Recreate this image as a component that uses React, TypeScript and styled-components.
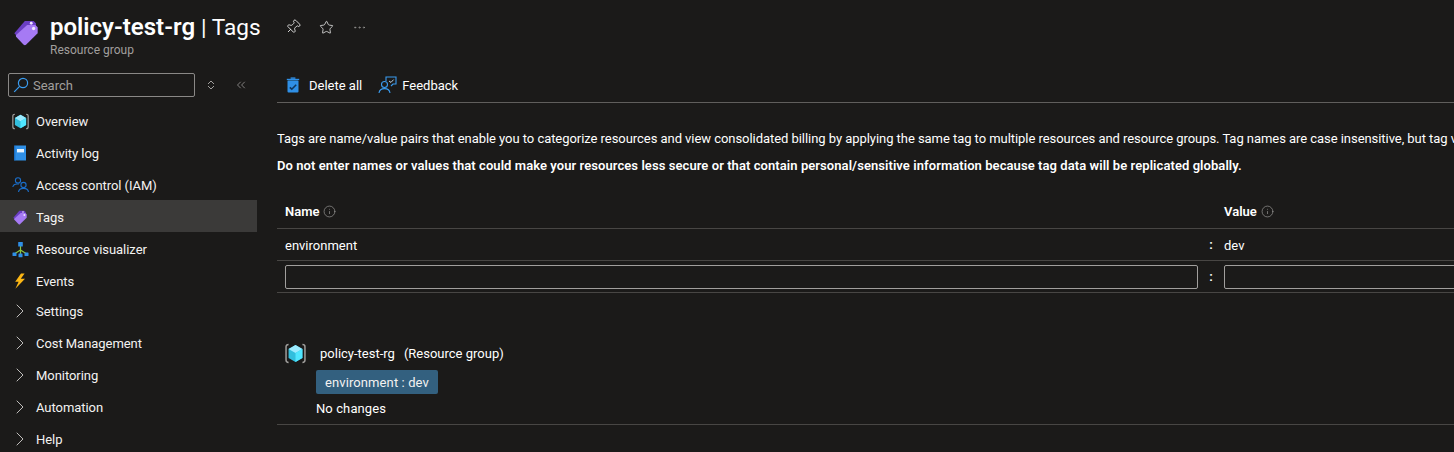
import React from 'react';
import styled, { createGlobalStyle } from 'styled-components';
import { ChevronRight, Pin, Star, Ellipsis, ChevronsLeft, Info } from 'lucide-react';

const GlobalStyle = createGlobalStyle`
  html, body {
    margin: 0;
    height: 100%;
    overflow: hidden;
    background: #1b1a19;
  }
  body {
    color: #fff;
    font-family: Roboto, "Open Sans", sans-serif;
    font-size: 13px;
  }
`;

const Page = styled.div`
  width: 1454px;
  height: 452px;
  overflow: hidden;
`;

const Header = styled.header`
  height: 65px;
  padding: 13px 0 0 12px;
  box-sizing: border-box;
  display: flex;
  align-items: flex-start;
`;

const BladeIcon = styled.div`
  width: 28px;
  height: 28px;
  margin: 5px 10px 0 0;
`;

const TitleBlock = styled.div`
  display: flex;
  flex-direction: column;
`;

const Title = styled.h1`
  margin: 0;
  font-size: 24px;
  line-height: 28px;
  font-weight: 600;
  color: #fff;
  white-space: nowrap;
  span {
    font-size: 22.6px;
    font-weight: 400;
  }
`;

const Subtitle = styled.div`
  font-size: 12px;
  line-height: 16px;
  color: #a19f9d;
`;

const TitleActions = styled.div`
  display: flex;
  align-items: center;
  gap: 18px;
  margin: 6px 0 0 24px;
  color: #e6e6e6;
`;

const PinIcon = styled(Pin)`
  transform: rotate(45deg);
`;

const Body = styled.div`
  display: grid;
  grid-template-columns: 257px 1fr;
  column-gap: 20px;
`;

const Sidebar = styled.nav`
  display: flex;
  flex-direction: column;
`;

const SearchRow = styled.div`
  display: flex;
  align-items: center;
  box-sizing: border-box;
  padding: 8px 0 7px 8px;
  height: 39px;
`;

const SearchBox = styled.div`
  width: 187px;
  height: 24px;
  box-sizing: border-box;
  border: 1px solid #8a8886;
  border-radius: 2px;
  display: flex;
  align-items: center;
  gap: 4px;
  padding-left: 4px;
  color: #a19f9d;
`;

const SearchTools = styled.div`
  display: flex;
  align-items: center;
  gap: 18px;
  margin-left: 11px;
  color: #a19f9d;
`;

const NavItem = styled.div<{ $active?: boolean }>`
  height: 32px;
  flex: none;
  display: flex;
  align-items: center;
  box-sizing: border-box;
  padding-top: 2px;
  background: ${(p) => (p.$active ? '#3b3a39' : 'transparent')};
  color: #f3f2f1;
  font-size: 13px;
  letter-spacing: -0.05px;
`;

const NavGroups = styled.div`
  display: flex;
  flex-direction: column;
  margin-top: -2px;
`;

const NavIconSlot = styled.div`
  width: 36px;
  padding-left: 12px;
  box-sizing: border-box;
  display: flex;
  align-items: center;
  color: #d2d0ce;
`;

const NavChevron = styled(ChevronRight)`
  margin-left: -4px;
  flex: none;
`;

const Main = styled.main`
  min-width: 0;
  display: flex;
  flex-direction: column;
  padding-top: 5px;
`;

const Toolbar = styled.div`
  height: 33px;
  box-sizing: border-box;
  border-bottom: 1px solid #605e5c;
  display: flex;
  align-items: center;
  padding: 0 0 2px 9px;
  gap: 16px;
`;

const ToolButton = styled.div<{ $gap: number }>`
  display: flex;
  align-items: center;
  gap: ${(p) => p.$gap}px;
  color: #fff;
`;

const Description = styled.p<{ $bold?: boolean }>`
  margin: 0;
  white-space: nowrap;
  overflow: hidden;
  font-size: 13px;
  line-height: 18px;
  font-weight: ${(p) => (p.$bold ? 600 : 400)};
  letter-spacing: ${(p) => (p.$bold ? '0.07px' : '-0.05px')};
  color: #fff;
`;

const Descriptions = styled.div`
  display: flex;
  flex-direction: column;
  gap: 9px;
  padding-top: 27px;
`;

const TagTable = styled.div`
  margin-top: 18px;
`;

const TagRow = styled.div<{ $height: number }>`
  display: grid;
  grid-template-columns: 913px 26px 1fr;
  height: ${(p) => p.$height}px;
  align-items: center;
  padding-left: 8px;
  box-sizing: border-box;
  border-bottom: 1px solid #484644;
`;

const HeaderCell = styled.div`
  display: flex;
  align-items: center;
  gap: 4px;
  font-weight: 600;
  color: #fff;
  padding-top: 2px;
`;

const InfoMark = styled.span`
  display: inline-flex;
  color: #a19f9d;
`;

const BodyCell = styled.div`
  padding-top: 1px;
`;

const Colon = styled.div`
  text-align: center;
  font-weight: 600;
`;

const TagInput = styled.input`
  width: 100%;
  height: 24px;
  box-sizing: border-box;
  background: transparent;
  border: 1px solid #a19f9d;
  border-radius: 2px;
  outline: none;
  display: block;
`;

const ValueInput = styled(TagInput)`
  width: calc(100% + 40px);
`;

const Summary = styled.section`
  margin-top: 48px;
  padding: 0 0 6px 8px;
  border-bottom: 1px solid #484644;
`;

const SummaryHead = styled.div`
  display: flex;
  align-items: center;
  height: 24px;
  gap: 14px;
  margin-bottom: 5px;
  span + span {
    margin-left: 9px;
  }
`;

const SummaryText = styled.div`
  white-space: nowrap;
`;

const SummaryBody = styled.div`
  padding-left: 31px;
`;

const TagPill = styled.div`
  display: inline-flex;
  align-items: center;
  height: 24px;
  padding: 0 9px;
  background: #33607f;
  border-radius: 2px;
  color: #f3f2f1;
  letter-spacing: 0.1px;
`;

const Status = styled.div`
  line-height: 18px;
  margin-top: 6px;
  letter-spacing: 0.1px;
`;

const TagGlyph: React.FC<{ size: number }> = ({ size }) => (
  <svg width={size} height={size} viewBox="0 0 24 24">
    <path d="M11 2.5 L18.5 2.5 L20.5 4.5 L20.5 9 L9 20.5 L2 13 Z" fill="#6b3fc4" />
    <path d="M13 6 L20 6 L22 8 L22 13 L12 23 Q11 23.6 10 23 L3.5 16 Q3 15 3.5 14.5 Z" fill="#a67af4" />
    <circle cx="18.5" cy="9" r="1.4" fill="#f0e6ff" />
    <circle cx="16.5" cy="4.5" r="1.2" fill="#f0e6ff" />
  </svg>
);

const CubeGlyph: React.FC<{ size: number }> = ({ size }) => (
  <svg width={size} height={size} viewBox="0 0 20 20">
    <path d="M3.4 1.5 Q1 1.5 1 3.5 V16.5 Q1 18.5 3.4 18.5 M16.6 1.5 Q19 1.5 19 3.5 V16.5 Q19 18.5 16.6 18.5" fill="none" stroke="#a19f9d" strokeWidth="1.4" />
    <path d="M10 2 L16.6 5.8 L16.6 14.2 L10 18 L3.4 14.2 L3.4 5.8 Z" fill="#32bedd" />
    <path d="M10 2 L16.6 5.8 L10 9.6 L3.4 5.8 Z" fill="#9cebff" />
    <path d="M10 9.6 L16.6 5.8 L16.6 14.2 L10 18 Z" fill="#50e6ff" />
  </svg>
);

const MagnifierGlyph = () => (
  <svg width="16" height="16" viewBox="0 0 16 16" fill="none" stroke="#3a9cf0" strokeWidth="1.2">
    <circle cx="10" cy="6" r="4.6" />
    <path d="M6.6 9.4 L1.2 14.8" />
  </svg>
);

const LogGlyph = () => (
  <svg width="16" height="16" viewBox="0 0 16 16">
    <path d="M2 2 Q2 0.5 3.5 0.5 H14 V15.5 H3.5 Q2 15.5 2 14 Z" fill="#2f8fe6" />
    <rect x="5" y="4" width="7" height="3.4" fill="#e8f4ff" />
    <rect x="2" y="0.5" width="1.4" height="15" fill="#1a6ec2" />
  </svg>
);

const PeopleGlyph = () => (
  <svg width="18" height="16" viewBox="0 0 18 16" fill="none" stroke="#1b6ec9" strokeWidth="1.1">
    <circle cx="6" cy="3.4" r="2.6" />
    <path d="M0.8 10 Q1.5 7 5 7 H7" />
    <circle cx="11.5" cy="8" r="2.6" />
    <path d="M6.5 15 Q7 11.4 11.5 11.4 Q16 11.4 16.5 15" />
  </svg>
);

const VisualizerGlyph = () => (
  <svg width="17" height="17" viewBox="0 0 17 17">
    <path d="M8.5 5 V13 M8.5 9 L3 12.5 M8.5 9 L14 12.5" stroke="#8cc63f" strokeWidth="1.2" fill="none" />
    <rect x="6.2" y="1" width="4.6" height="4.6" rx="0.5" fill="#2f8fe6" />
    <rect x="0.5" y="11.5" width="4" height="3.6" rx="0.5" fill="#2f8fe6" />
    <rect x="6.5" y="12.6" width="4" height="3.6" rx="0.5" fill="#2f8fe6" />
    <rect x="12.5" y="11.5" width="4" height="3.6" rx="0.5" fill="#2f8fe6" />
  </svg>
);

const BoltGlyph = () => (
  <svg width="16" height="16" viewBox="0 0 16 16">
    <path d="M9 0.5 H12.6 L8.8 5.8 L13 5.8 L3.4 15.8 L6.6 8.8 L3.2 8.8 Z" fill="#fcb714" />
  </svg>
);

const TrashGlyph = () => (
  <svg width="14" height="16" viewBox="0 0 14 16">
    <rect x="1.5" y="3.4" width="11" height="12" rx="1" fill="#2f8fe6" />
    <rect x="0.8" y="1.8" width="12.4" height="1.4" fill="#2f8fe6" />
    <rect x="4.6" y="0.4" width="4.8" height="1.4" fill="#2f8fe6" />
    <path d="M3.8 10.4 L5.8 12.2 L10.2 7.8" stroke="#10365c" strokeWidth="1.6" fill="none" />
  </svg>
);

const FeedbackGlyph = () => (
  <svg width="19" height="18" viewBox="0 0 19 18" fill="none" stroke="#3a9cf0" strokeWidth="1.1">
    <path d="M8 5 V1 H18 V8 H15 L13 10" />
    <circle cx="6.5" cy="8.5" r="3" />
    <path d="M1 17 Q1.5 12.6 6.5 12.6 Q11.5 12.6 12 17" />
    <path d="M11 5 L13 6.4 L15.6 3.6" stroke="#cfe6fb" strokeWidth="0.9" />
  </svg>
);

const SortGlyph = () => (
  <svg width="10" height="10" viewBox="0 0 10 10" fill="none" stroke="#a19f9d" strokeWidth="1">
    <path d="M2 4 L5 1 L8 4 M2 6 L5 9 L8 6" />
  </svg>
);

const topItems = [
  { label: 'Overview', icon: <CubeGlyph size={17} /> },
  { label: 'Activity log', icon: <LogGlyph /> },
  { label: 'Access control (IAM)', icon: <PeopleGlyph /> },
  { label: 'Tags', icon: <TagGlyph size={16} />, active: true },
  { label: 'Resource visualizer', icon: <VisualizerGlyph /> },
  { label: 'Events', icon: <BoltGlyph /> },
];

const groupItems = ['Settings', 'Cost Management', 'Monitoring', 'Automation', 'Help'];

const App: React.FC = () => (
  <Page>
    <GlobalStyle />
    <Header>
      <BladeIcon>
        <TagGlyph size={28} />
      </BladeIcon>
      <TitleBlock>
        <Title>
          policy-test-rg <span>| Tags</span>
        </Title>
        <Subtitle>Resource group</Subtitle>
      </TitleBlock>
      <TitleActions>
        <PinIcon size={16} strokeWidth={1.3} />
        <Star size={15} strokeWidth={1.3} />
        <Ellipsis size={15} strokeWidth={1} color="#a19f9d" />
      </TitleActions>
    </Header>
    <Body>
      <Sidebar>
        <SearchRow>
          <SearchBox>
            <MagnifierGlyph />
            Search
          </SearchBox>
          <SearchTools>
            <SortGlyph />
            <ChevronsLeft size={14} strokeWidth={1.3} />
          </SearchTools>
        </SearchRow>
        {topItems.map((item) => (
          <NavItem key={item.label} $active={item.active}>
            <NavIconSlot>{item.icon}</NavIconSlot>
            {item.label}
          </NavItem>
        ))}
        <NavGroups>
          {groupItems.map((label) => (
            <NavItem key={label}>
              <NavIconSlot>
                <NavChevron size={24} strokeWidth={0.9} />
              </NavIconSlot>
              {label}
            </NavItem>
          ))}
        </NavGroups>
      </Sidebar>
      <Main>
        <Toolbar>
          <ToolButton $gap={9}>
            <TrashGlyph />
            Delete all
          </ToolButton>
          <ToolButton $gap={5}>
            <FeedbackGlyph />
            Feedback
          </ToolButton>
        </Toolbar>
        <Descriptions>
          <Description>
            Tags are name/value pairs that enable you to categorize resources and view consolidated billing by applying
            the same tag to multiple resources and resource groups. Tag names are case insensitive, but tag values are
            case sensitive.
          </Description>
          <Description $bold>
            Do not enter names or values that could make your resources less secure or that contain personal/sensitive
            information because tag data will be replicated globally.
          </Description>
        </Descriptions>
        <TagTable>
          <TagRow $height={36}>
            <HeaderCell>
              Name
              <InfoMark>
                <Info size={13} strokeWidth={1.2} />
              </InfoMark>
            </HeaderCell>
            <div />
            <HeaderCell>
              Value
              <InfoMark>
                <Info size={13} strokeWidth={1.2} />
              </InfoMark>
            </HeaderCell>
          </TagRow>
          <TagRow $height={32}>
            <BodyCell>environment</BodyCell>
            <Colon>:</Colon>
            <BodyCell>dev</BodyCell>
          </TagRow>
          <TagRow $height={32}>
            <TagInput aria-label="Tag name" />
            <Colon>:</Colon>
            <ValueInput aria-label="Tag value" />
          </TagRow>
        </TagTable>
        <Summary>
          <SummaryHead>
            <CubeGlyph size={21} />
            <SummaryText>
              <span>policy-test-rg</span>
              <span>(Resource group)</span>
            </SummaryText>
          </SummaryHead>
          <SummaryBody>
            <TagPill>environment : dev</TagPill>
            <Status>No changes</Status>
          </SummaryBody>
        </Summary>
      </Main>
    </Body>
  </Page>
);

export default App;
